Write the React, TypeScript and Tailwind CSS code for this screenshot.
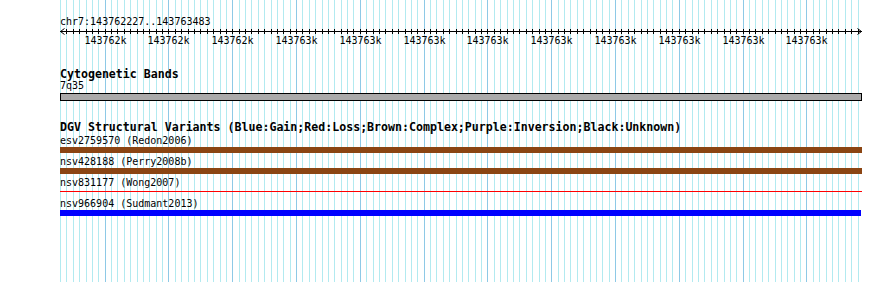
import React from 'react';

const gridXs = Array.from({ length: 126 }, (_, i) => Math.round(60 + i * 6.38));

const rulerLabels = [
  '143762k',
  '143762k',
  '143762k',
  '143763k',
  '143763k',
  '143763k',
  '143763k',
  '143763k',
  '143763k',
  '143763k',
  '143763k',
  '143763k',
];

const tracks: { label: string; kind: 'brown' | 'red' | 'blue' }[] = [
  { label: 'esv2759570 (Redon2006)', kind: 'brown' },
  { label: 'nsv428188 (Perry2008b)', kind: 'brown' },
  { label: 'nsv831177 (Wong2007)', kind: 'red' },
  { label: 'nsv966904 (Sudmant2013)', kind: 'blue' },
];

const Grid: React.FC = () => (
  <svg className="absolute inset-0" width={890} height={282} shapeRendering="crispEdges">
    {gridXs.map((x, i) => (
      <line
        key={i}
        x1={x + 0.5}
        x2={x + 0.5}
        y1={0}
        y2={282}
        stroke={i % 10 === 7 ? '#8ec9e6' : '#b2eaf0'}
        strokeWidth={1}
      />
    ))}
  </svg>
);

// scale bar with arrows, ticks on every grid line and a label on each major one
const Ruler: React.FC = () => {
  const majors = gridXs.filter((_, i) => i % 10 === 7);
  return (
    <svg width={804} height={20} className="block overflow-visible">
      <g shapeRendering="crispEdges">
        <line x1={0} x2={802} y1={3.5} y2={3.5} stroke="#000" />
        {gridXs.map((x, i) =>
          i === 0 ? null : (
            <line key={i} x1={x - 60 + 0.5} x2={x - 60 + 0.5} y1={1} y2={6} stroke="#000" />
          ),
        )}
      </g>
      <polyline points="4.5,0.5 0.5,3.5 4.5,6.5" fill="none" stroke="#000" />
      <polyline points="797.5,0.5 801.5,3.5 797.5,6.5" fill="none" stroke="#000" />
      {majors.map((x, i) => (
        <text
          key={i}
          x={x - 60 + 0.5}
          y={16}
          textAnchor="middle"
          fontSize={10}
          fontFamily="'DejaVu Sans Mono', monospace"
          fill="#000"
        >
          {rulerLabels[i]}
        </text>
      ))}
    </svg>
  );
};

const Track: React.FC<{ label: string; kind: 'brown' | 'red' | 'blue' }> = ({ label, kind }) => (
  <div className="flex flex-col">
    <div className="h-[12px] text-[10px] leading-[12px] whitespace-nowrap">{label}</div>
    {kind === 'brown' && <div className="h-[6px] w-[802px] bg-[#8b4513]" />}
    {kind === 'red' && (
      <div className="h-[6px] w-[802px] pt-[2px]">
        <div className="h-[1px] w-full bg-[#ff0000]" />
      </div>
    )}
    {kind === 'blue' && <div className="h-[6px] w-[801px] bg-[#0000ff]" />}
  </div>
);

export default function App() {
  return (
    <div className="relative w-[890px] h-[282px] overflow-hidden bg-white text-black font-['DejaVu_Sans_Mono',monospace]">
      <Grid />
      <div className="relative flex flex-col pl-[60px] pt-[16px] w-[862px]">
        <div className="h-[12px] text-[10px] leading-[12px] whitespace-nowrap">
          chr7:143762227..143763483
        </div>
        <Ruler />
        <div className="mt-[20px] h-[12px] text-[11.6px] leading-[12px] font-bold whitespace-nowrap">
          Cytogenetic Bands
        </div>
        <div className="h-[12px] text-[10px] leading-[12px] whitespace-nowrap">7q35</div>
        <div className="mt-[1px] h-[8px] w-[802px] border border-black bg-[#aaaaaa]" />
        <div className="mt-[20px] h-[12px] text-[11.6px] leading-[12px] font-bold whitespace-nowrap">
          DGV Structural Variants (Blue:Gain;Red:Loss;Brown:Complex;Purple:Inversion;Black:Unknown)
        </div>
        <div className="mt-[2px] flex flex-col gap-[3px]">
          {tracks.map(t => (
            <Track key={t.label} label={t.label} kind={t.kind} />
          ))}
        </div>
      </div>
    </div>
  );
}
